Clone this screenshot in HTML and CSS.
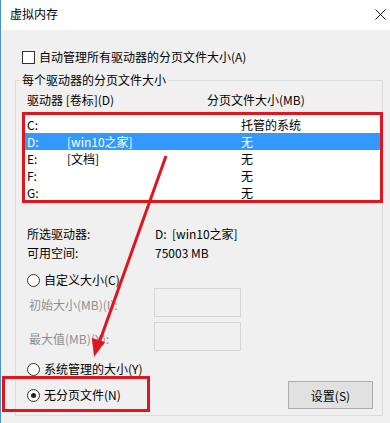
FILE: index.html
```html
<!DOCTYPE html>
<html lang="zh-CN">
<head>
    <meta charset="UTF-8">
    <title>虚拟内存</title>
    <link rel="stylesheet" href="styles.css">
</head>
<body>
    <div class="window">
        <!-- Title bar -->
        <div class="titlebar">
            <span class="title">虚拟内存</span>
            <svg class="close" width="11" height="11" viewBox="0 0 11 11">
                <path d="M0.5 0.5 L10.5 10.5 M10.5 0.5 L0.5 10.5" stroke="#111" stroke-width="1" fill="none"/>
            </svg>
        </div>

        <!-- Dialog body -->
        <div class="dialog">
            <label class="check-row">
                <span class="checkbox"></span>
                <span>自动管理所有驱动器的分页文件大小(A)</span>
            </label>

            <fieldset class="group">
                <legend>每个驱动器的分页文件大小</legend>

                <div class="list-head">
                    <span>驱动器 [卷标](D)</span>
                    <span>分页文件大小(MB)</span>
                </div>

                <div class="drive-list mark">
                    <div class="drive-row"><span>C:</span><span></span><span>托管的系统</span></div>
                    <div class="drive-row selected"><span>D:</span><span>[win10之家]</span><span>无</span></div>
                    <div class="drive-row"><span>E:</span><span>[文档]</span><span>无</span></div>
                    <div class="drive-row"><span>F:</span><span></span><span>无</span></div>
                    <div class="drive-row"><span>G:</span><span></span><span>无</span></div>
                </div>

                <div class="info">
                    <span>所选驱动器:</span><span>D:&nbsp;&nbsp;[win10之家]</span>
                    <span>可用空间:</span><span>75003 MB</span>
                </div>

                <div class="radio-row first">
                    <span class="radio"></span><span>自定义大小(C)</span>
                </div>

                <div class="size-row">
                    <span class="size-label">初始大小(MB)(I):</span>
                    <span class="size-box"></span>
                </div>
                <div class="size-row second">
                    <span class="size-label">最大值(MB)(X):</span>
                    <span class="size-box"></span>
                </div>

                <div class="radio-row managed">
                    <span class="radio"></span><span>系统管理的大小(Y)</span>
                </div>

                <div class="bottom-row">
                    <div class="radio-row none-file">
                        <span class="radio checked"></span><span>无分页文件(N)</span>
                    </div>
                    <button class="btn" type="button">设置(S)</button>
                </div>
            </fieldset>
        </div>

        <!-- Annotation arrow -->
        <svg class="arrow" width="390" height="423" viewBox="0 0 390 423">
            <line x1="165" y1="156" x2="97" y2="346" stroke="#e0161e" stroke-width="3"/>
            <polygon points="93,357 104,342 91,338" fill="#e0161e"/>
        </svg>
    </div>
</body>
</html>
```

FILE: styles.css
```css
/* ====== Base ====== */
body {
    margin: 0;
    background: #f0f0f0;
    font-family: "Noto Sans CJK SC", "Noto Sans", sans-serif;
    font-size: 12px;
    line-height: 16px;
    color: #000;
}
.window {
    position: relative;
    width: 390px;
    height: 423px;
    box-sizing: border-box;
    border-left: 1px solid #4a93bf;
    background: #f0f0f0;
    overflow: hidden;
}

/* ====== Title bar ====== */
.titlebar {
    height: 30px;
    background: #fff;
    display: flex;
    align-items: center;
    justify-content: space-between;
    padding: 0 4px 2px 9px;
    box-sizing: border-box;
}
.title {
    font-size: 12px;
}
.close {
    display: block;
}

/* ====== Dialog body ====== */
.dialog {
    padding: 19px 0 0 14px;
}
.check-row {
    display: flex;
    align-items: center;
    gap: 4px;
    padding-left: 7px;
    height: 16px;
}
.checkbox {
    width: 11px;
    height: 11px;
    border: 1px solid #333;
    background: #fff;
}

/* ====== Group box ====== */
.group {
    width: 368px;
    box-sizing: border-box;
    margin: 7px 0 0 0;
    padding: 0 0 6px 6px;
    border: 1px solid #dcdcdc;
    min-width: 0;
}
.group legend {
    padding: 0 2px;
    margin-left: -2px;
}
.list-head {
    display: grid;
    grid-template-columns: 180px 1fr;
    padding-left: 5px;
    margin-top: 4px;
}

/* ====== Drive list ====== */
.drive-list {
    position: relative;
    width: 361px;
    height: 91px;
    box-sizing: border-box;
    margin-top: 4px;
    padding-top: 4px;
    background: #fff;
}
.drive-row {
    display: grid;
    grid-template-columns: 40px 174px 1fr;
    height: 17px;
    line-height: 17px;
    padding-left: 5px;
}
.drive-row.selected {
    background: #3399ff;
    color: #fff;
}
.mark::after {
    content: "";
    position: absolute;
    inset: 0;
    border: 3px solid #e0161e;
    pointer-events: none;
}

/* ====== Selected drive info ====== */
.info {
    display: grid;
    grid-template-columns: 128px 1fr;
    row-gap: 3px;
    padding-left: 5px;
    margin-top: 23px;
}

/* ====== Radios ====== */
.radio-row {
    display: flex;
    align-items: center;
    gap: 4px;
    padding-left: 5px;
    height: 16px;
}
.radio-row.first {
    margin-top: 11px;
}
.radio-row.managed {
    margin-top: 10px;
}
.radio {
    position: relative;
    width: 11px;
    height: 11px;
    border: 1px solid #333;
    border-radius: 50%;
    background: #fff;
}
.radio.checked::after {
    content: "";
    position: absolute;
    left: 3px;
    top: 3px;
    width: 5px;
    height: 5px;
    border-radius: 50%;
    background: #222;
}

/* ====== Size inputs (disabled) ====== */
.size-row {
    display: flex;
    align-items: center;
    height: 29px;
    padding-left: 7px;
}
.size-row.second {
    margin-top: 5px;
}
.size-label {
    width: 125px;
    color: #8f8f8f;
    padding-top: 5px;
}
.size-box {
    width: 87px;
    height: 29px;
    box-sizing: border-box;
    border: 1px solid #d6d6d6;
    background: #f0f0f0;
}

/* ====== Bottom row ====== */
.bottom-row {
    display: flex;
    align-items: center;
    justify-content: space-between;
    margin-top: 4px;
    height: 28px;
    padding-right: 9px;
}
.none-file {
    position: relative;
}
.none-file::after {
    content: "";
    position: absolute;
    left: -20px;
    top: -11px;
    width: 148px;
    height: 36px;
    box-sizing: border-box;
    border: 3px solid #e0161e;
    pointer-events: none;
}
.btn {
    width: 85px;
    height: 28px;
    background: #e1e1e1;
    border: 1px solid #adadad;
    font-family: inherit;
    font-size: 12px;
    color: #000;
    padding: 0;
}

/* ====== Annotation ====== */
.arrow {
    position: absolute;
    left: 0;
    top: 0;
    pointer-events: none;
}
```
